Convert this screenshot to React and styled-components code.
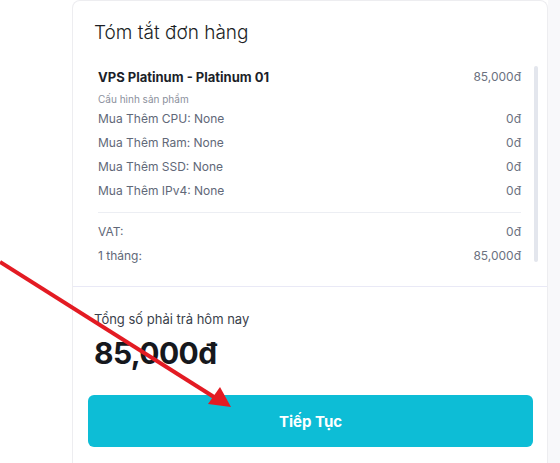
import styled, {createGlobalStyle} from 'styled-components';

const GlobalStyle = createGlobalStyle`
  html, body {
    margin: 0;
    padding: 0;
    background: #ffffff;
    font-family: Inter, "Noto Sans", sans-serif;
  }
  #root {
    height: 463px;
    overflow: hidden;
  }
`;

const Page = styled.div`
  position: relative;
  display: flex;
  height: 463px;
`;

const MainColumn = styled.div`
  width: 548px;
  padding-left: 72px;
  box-sizing: border-box;
  background: #ffffff;
`;

const SideColumn = styled.div`
  flex: 1;
  background: #f8f8fa;
`;

const Card = styled.div`
  border: 1px solid #ededf0;
  border-bottom: none;
  border-radius: 8px 8px 0 0;
  background: #ffffff;
  height: 480px;
  box-sizing: border-box;
`;

const TopSection = styled.div`
  padding: 18px 9px 24px 21px;
  border-bottom: 1px solid #e9e9f6;
`;

const Title = styled.h3`
  margin: 0 0 19px;
  font-size: 19px;
  line-height: 28px;
  font-weight: 300;
  color: #1c1f26;
`;

const ScrollBox = styled.div`
  display: flex;
  gap: 13px;
`;

const Items = styled.div`
  flex: 1;
  height: 196px;
  padding-left: 4px;
`;

const ScrollThumb = styled.div`
  width: 4px;
  height: 196px;
  border-radius: 2px;
  background: #e3e6ed;
`;

const Row = styled.div`
  display: flex;
  justify-content: space-between;
  align-items: center;
  font-size: 12px;
  line-height: 24px;
  color: #616878;
`;

const ProductRow = styled(Row)`
  line-height: 22px;
  margin-bottom: 4px;
`;

const ProductName = styled.span`
  font-size: 13px;
  font-weight: 700;
  color: #1c1f2a;
`;

const Price = styled.span`
  font-size: 12px;
  color: #6b7180;
`;

const SubLabel = styled.div`
  font-size: 10px;
  line-height: 15px;
  color: #8b909c;
`;

const Divider = styled.div`
  height: 1px;
  background: #eceef3;
  margin: 9px 0 7px;
`;

const Summary = styled.div`
  padding: 22px 14px 0 15px;
`;

const TotalLabel = styled.div`
  padding-left: 6px;
  font-size: 13px;
  line-height: 20px;
  color: #3a3f4b;
`;

const TotalValue = styled.div`
  padding-left: 6px;
  margin-top: 4px;
  font-size: 30px;
  line-height: 40px;
  font-weight: 700;
  color: #16181d;
  letter-spacing: -0.6px;
`;

const ContinueButton = styled.button`
  display: block;
  width: 100%;
  height: 52px;
  margin-top: 22px;
  border: none;
  border-radius: 6px;
  background: #0dbdd6;
  color: #ffffff;
  font-family: Inter, "Noto Sans", sans-serif;
  font-size: 15px;
  font-weight: 700;
  cursor: pointer;
`;

const ArrowLayer = styled.svg`
  position: absolute;
  left: 0;
  top: 0;
  pointer-events: none;
`;

const options = [
    {label: 'Mua Thêm CPU: None', price: '0đ'},
    {label: 'Mua Thêm Ram: None', price: '0đ'},
    {label: 'Mua Thêm SSD: None', price: '0đ'},
    {label: 'Mua Thêm IPv4: None', price: '0đ'},
];

export default function App() {
    return (
        <>
            <GlobalStyle/>
            <Page>
                <MainColumn>
                    <Card>
                        <TopSection>
                            <Title>Tóm tắt đơn hàng</Title>
                            <ScrollBox>
                                <Items>
                                    <ProductRow>
                                        <ProductName>VPS Platinum - Platinum 01</ProductName>
                                        <Price>85,000đ</Price>
                                    </ProductRow>
                                    <SubLabel>Cấu hình sản phẩm</SubLabel>
                                    {options.map((item) => (
                                        <Row key={item.label}>
                                            <span>{item.label}</span>
                                            <Price>{item.price}</Price>
                                        </Row>
                                    ))}
                                    <Divider/>
                                    <Row>
                                        <span>VAT:</span>
                                        <Price>0đ</Price>
                                    </Row>
                                    <Row>
                                        <span>1 tháng:</span>
                                        <Price>85,000đ</Price>
                                    </Row>
                                </Items>
                                <ScrollThumb/>
                            </ScrollBox>
                        </TopSection>
                        <Summary>
                            <TotalLabel>Tổng số phải trả hôm nay</TotalLabel>
                            <TotalValue>85,000đ</TotalValue>
                            <ContinueButton>Tiếp Tục</ContinueButton>
                        </Summary>
                    </Card>
                </MainColumn>
                <SideColumn/>
                <ArrowLayer width="560" height="463" viewBox="0 0 560 463">
                    <line x1="0" y1="262" x2="214" y2="397" stroke="#e31b23" strokeWidth="4"/>
                    <polygon points="231,407 208,404 220,387" fill="#e31b23"/>
                </ArrowLayer>
            </Page>
        </>
    );
}
